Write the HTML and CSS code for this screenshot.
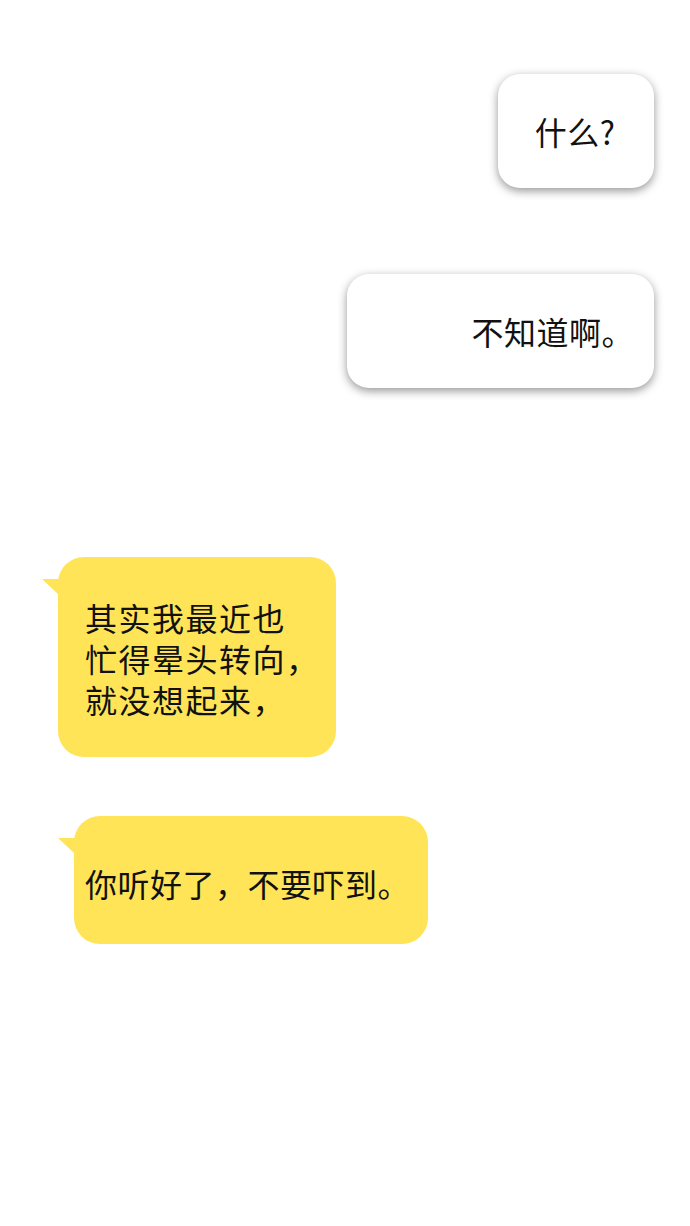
FILE: index.html
```html
<!DOCTYPE html>
<html lang="zh-CN">
<head>
<meta charset="utf-8">
<title>Chat</title>
<link rel="stylesheet" href="styles.css">
</head>
<body>
<main class="chat">
  <div class="bubble white b1"><span>什么?</span></div>
  <div class="bubble white b2"><span>不知道啊。</span></div>
  <div class="bubble yellow y1"><span>其实我最近也<br>忙得晕头转向，<br>就没想起来，</span></div>
  <div class="bubble yellow y2"><span>你听好了，不要吓到。</span></div>
</main>
</body>
</html>
```

FILE: styles.css
```css
html, body {
  margin: 0;
  padding: 0;
  background: #ffffff;
}
.chat {
  width: 690px;
  height: 1226px;
  display: flex;
  flex-direction: column;
  font-family: "Noto Sans CJK SC", "Noto Sans", sans-serif;
  font-size: 32px;
  letter-spacing: 0.5px;
  color: #111;
  box-sizing: border-box;
  padding-top: 74px;
}
.bubble {
  box-sizing: border-box;
  display: flex;
  align-items: center;
  position: relative;
}
.white {
  background: #ffffff;
  border-radius: 22px;
  box-shadow: 0 3px 10px rgba(0, 0, 0, 0.42);
  align-self: flex-end;
  margin-right: 36px;
  height: 114px;
}
.b1 {
  width: 156px;
  justify-content: center;
  padding-right: 2px;
}
.b2 {
  width: 307px;
  margin-top: 86px;
  justify-content: flex-end;
  padding-right: 20px;
}
.yellow {
  background: #ffe457;
  border-radius: 26px;
  align-self: flex-start;
}
.yellow::before {
  content: "";
  position: absolute;
  left: -16px;
  top: 22px;
  width: 22px;
  height: 20px;
  background: #ffe457;
  clip-path: polygon(0 0, 100% 0, 100% 100%, 82% 85%);
}
.y1 {
  margin-top: 169px;
  margin-left: 58px;
  width: 278px;
  height: 200px;
  padding-left: 27px;
  padding-top: 2px;
  line-height: 41px;
  letter-spacing: 1.5px;
}
.y2 {
  margin-top: 59px;
  margin-left: 74px;
  width: 354px;
  height: 128px;
  padding-left: 11px;
  padding-top: 6px;
}
```
